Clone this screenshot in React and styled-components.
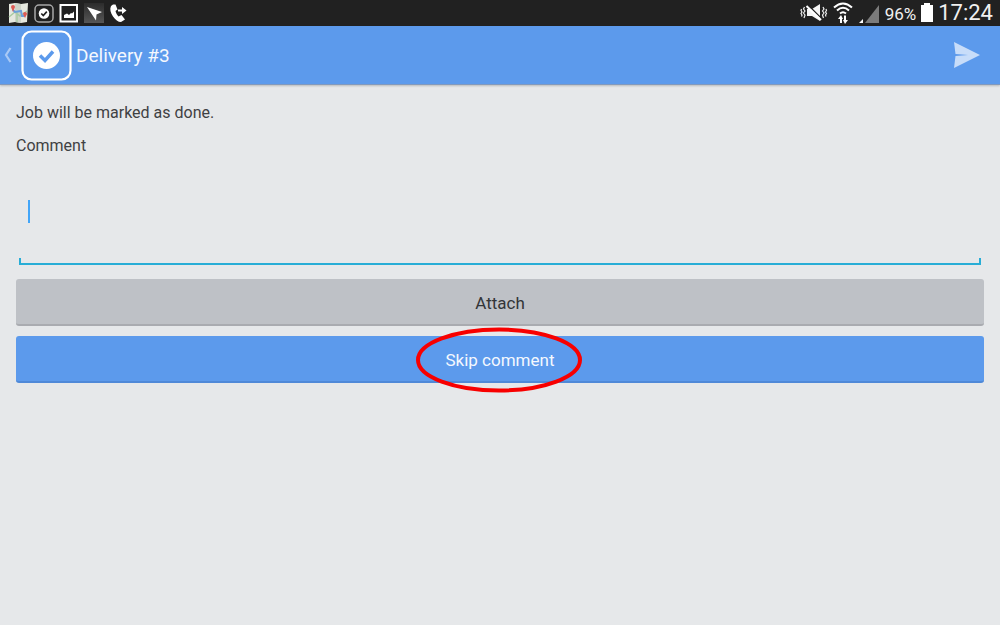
import React, { useState } from 'react';
import styled, { createGlobalStyle } from 'styled-components';

const GlobalStyle = createGlobalStyle`
    * {
        box-sizing: border-box;
    }
    body {
        margin: 0;
        background-color: #e6e8ea;
        color: #3f4143;
        font-family: Roboto, "Liberation Sans", sans-serif;
        font-size: 16px;
    }
    button, textarea {
        font: inherit;
    }
`;

const StatusBar = styled.div`
    display: flex;
    align-items: center;
    justify-content: space-between;
    height: 26px;
    padding: 0 7px 0 8px;
    background-color: #212121;
    color: #f0f0f0;
`;

const StatusGroup = styled.div`
    display: flex;
    align-items: center;
    gap: 5px;
`;

const StatusIcon = styled.svg`
    display: block;
    width: ${props => props.width}px;
    height: 22px;
`;

const Battery = styled.span`
    font-size: 17px;
    line-height: 26px;
    padding-top: 2px;
`;

const Clock = styled.span`
    font-size: 22px;
    line-height: 26px;
`;

const Header = styled.header`
    display: flex;
    align-items: center;
    height: 59px;
    padding: 0 20px 0 4px;
    background-color: #5c9aec;
    border-bottom: 1px solid #8199bd;
    box-shadow: 0 1px 2px rgba(0, 0, 0, 0.2);
    color: #f4f8fe;
`;

const IconButton = styled.button`
    display: flex;
    align-items: center;
    gap: 9px;
    padding: 0;
    border: none;
    background: none;
`;

const Badge = styled.svg`
    display: block;
    width: 51px;
    height: 51px;
`;

const Title = styled.h1`
    flex: 1;
    margin: 0;
    padding: 2px 4px 0;
    font-size: 19px;
    font-weight: 400;
    line-height: 24px;
`;

const Form = styled.form`
    display: grid;
    gap: 10px;
    padding: 16px;
`;

const Message = styled.p`
    margin: 0;
    line-height: 23px;
`;

const Label = styled.label`
    line-height: 23px;
`;

const Field = styled.div`
    position: relative;
    margin: 0 3px 4px;

    &::after {
        content: '';
        position: absolute;
        right: 0;
        bottom: 0;
        left: 0;
        height: 5px;
        border: 2px solid #28add6;
        border-top: none;
        pointer-events: none;
    }
`;

const CommentBox = styled.textarea`
    display: block;
    width: 100%;
    height: 98px;
    padding: 33px 9px;
    border: none;
    outline: none;
    background: transparent;
    color: inherit;
    line-height: 23px;
    resize: none;
    overflow: hidden;
    caret-color: transparent;
`;

const Caret = styled.span`
    position: absolute;
    top: 33px;
    left: 9px;
    width: 2px;
    height: 23px;
    background-color: #42a5f8;
    pointer-events: none;
`;

const Button = styled.button`
    position: relative;
    height: 47px;
    padding: 2px 0 0;
    border: none;
    border-bottom: 2px solid ${props => props.$primary ? '#4f89d8' : '#a9abb0'};
    border-radius: 3px;
    background-color: ${props => props.$primary ? '#5c9aec' : '#bec1c6'};
    color: ${props => props.$primary ? '#f4f8fe' : '#333538'};
    font-size: 17px;
`;

const Highlight = styled.svg`
    position: absolute;
    top: 50%;
    left: 50%;
    width: 168px;
    height: 70px;
    transform: translate(-50%, -50%);
    pointer-events: none;
`;

function Notifications() {
    return (
        <StatusGroup>
            <StatusIcon width={20} viewBox="0 0 20 22">
                <path d="M1 2l6-1 6 1 7-1-1 19-6 1-6-1-6 1z" fill="#e6e8df"/>
                <path d="M7 1l6 1v19l-6-1z" fill="#cdd3c8"/>
                <path d="M1 15l6-5 5 4 7-5M9 10v10" stroke="#a9cba2" strokeWidth="1.5" fill="none"/>
                <path d="M5 8l2 2 6-1 1 5h3" stroke="#6b9fdc" strokeWidth="2" fill="none"/>
                <path d="M3 5a2 2 0 1 1 4 0l-2 5z" fill="#dc5a54"/>
                <path d="M15 12a2 2 0 1 1 4 0l-2 4z" fill="#dc5a54"/>
            </StatusIcon>
            <StatusIcon width={21} viewBox="0 0 21 22">
                <rect x="2" y="3" width="18" height="17" rx="4" fill="none" stroke="#a8a8a8" strokeWidth="1.5"/>
                <circle cx="11" cy="11.5" r="5.3" fill="#fff"/>
                <path d="M8.3 11.5l2 2 3.5-3.8" stroke="#212121" strokeWidth="1.7" fill="none"/>
            </StatusIcon>
            <StatusIcon width={20} viewBox="0 0 20 22">
                <rect x="1.5" y="3" width="16.5" height="16.5" fill="none" stroke="#fff" strokeWidth="2"/>
                <path d="M5 16v-3l3-1.5 2 1.5 2-2 1 .5 2-2V16z" fill="#fff"/>
            </StatusIcon>
            <StatusIcon width={20} viewBox="0 0 20 22">
                <defs>
                    <linearGradient id="tile" x2="0" y2="1">
                        <stop offset="0" stopColor="#2c2c2c"/>
                        <stop offset="1" stopColor="#565656"/>
                    </linearGradient>
                </defs>
                <path d="M0 1h20v20H0z" fill="url(#tile)"/>
                <path d="M3 5l15 5-5.5 2.5-.5 6z" fill="#fff"/>
            </StatusIcon>
            <StatusIcon width={18} viewBox="0 0 18 22">
                <path d="M4 2.5L2 4c-1.500 3-.5 7 2 10.5s5 5.5 8 5.5l4-2.5-3.5-4.500-3 1.5C8 13 7 11 6.5 9L8.500 7.500 6.5 2.5z" fill="#fff"/>
                <path d="M9 8.500h6" stroke="#fff" strokeWidth="2"/>
                <path d="M13 5l4.5 3.5L13 12z" fill="#fff"/>
            </StatusIcon>
        </StatusGroup>
    );
}

function SystemInfo() {
    return (
        <StatusGroup>
            <StatusIcon width={28} viewBox="0 0 28 22">
                <path d="M7 7h5l8-5v17l-8-5H7z" fill="#f4f4f4"/>
                <path d="M8 3l14 14" stroke="#212121" strokeWidth="1.5"/>
                <path d="M6.500 4L21 18" stroke="#fff" strokeWidth="2"/>
                <path d="M4.500 5l-1 2 1.5 2-1.5 2L5 13l-1 3M1.500 7l-.5 1.500L2 10l-1 1.500L2 13l-.5 1.5M23 5l1 2-1.500 2 1.500 2-1.500 2 1 3M26 7l.5 1.500-1 1.500 1 1.500-1 1.500.5 1.5" stroke="#eee" strokeWidth="1.2" fill="none"/>
            </StatusIcon>
            <StatusIcon width={20} viewBox="0 0 20 22">
                <path d="M1 5.500q9-8 18 0M4 8.500q6-5.500 12 0M7 11.500q3-2.500 6 0" stroke="#fff" strokeWidth="2" fill="none"/>
                <path d="M8 21v-6M12 13.500V19" stroke="#fff" strokeWidth="2"/>
                <path d="M5 17l3-4 2 4zM10 18l2 4 3-4z" fill="#fff"/>
            </StatusIcon>
            <StatusIcon width={22} viewBox="0 0 22 22">
                <path d="M21 3v18H7z" fill="#7b7b7b"/>
                <path d="M5 17v4H1z" fill="#fff"/>
            </StatusIcon>
            <Battery>96%</Battery>
            <StatusIcon width={12} viewBox="0 0 12 22">
                <path d="M3 1h6v2h3v17H0V3h3z" fill="#fff"/>
            </StatusIcon>
            <Clock>17:24</Clock>
        </StatusGroup>
    );
}

function App() {
    const [comment, setComment] = useState('');

    return (
        <>
            <GlobalStyle/>
            <StatusBar>
                <Notifications/>
                <SystemInfo/>
            </StatusBar>
            <Header>
                <IconButton type="button" aria-label="Back">
                    <svg width="8" height="16" viewBox="0 0 8 16">
                        <path d="M6.5 1L2 8l4.5 7" stroke="#a9c9f5" strokeWidth="2.2" fill="none"/>
                    </svg>
                    <Badge viewBox="0 0 51 51">
                        <rect x="1.5" y="1.5" width="48" height="48" rx="9" fill="none" stroke="#fff" strokeWidth="2.2"/>
                        <circle cx="25.5" cy="25.5" r="13.5" fill="#fff"/>
                        <path d="M19 25.5l5 5 8-9" stroke="#5c9aec" strokeWidth="3.5" fill="none"/>
                    </Badge>
                </IconButton>
                <Title>Delivery #3</Title>
                <IconButton type="button" aria-label="Send">
                    <svg width="26" height="26" viewBox="0 0 26 26">
                        <path d="M0 0l26 13L0 26l1.5-12L14 13 1.5 12z" fill="#c8ddf9"/>
                    </svg>
                </IconButton>
            </Header>
            <Form onSubmit={e => e.preventDefault()}>
                <Message>Job will be marked as done.</Message>
                <Label htmlFor="comment">Comment</Label>
                <Field>
                    <CommentBox id="comment" value={comment} onChange={e => setComment(e.target.value)}/>
                    {comment === '' && <Caret/>}
                </Field>
                <Button type="button">Attach</Button>
                <Button type="submit" $primary>
                    Skip comment
                    <Highlight viewBox="0 0 168 70">
                        <ellipse cx="83" cy="36" rx="81" ry="30.5" fill="none" stroke="#f80000" strokeWidth="4"/>
                    </Highlight>
                </Button>
            </Form>
        </>
    );
}

export default App;
